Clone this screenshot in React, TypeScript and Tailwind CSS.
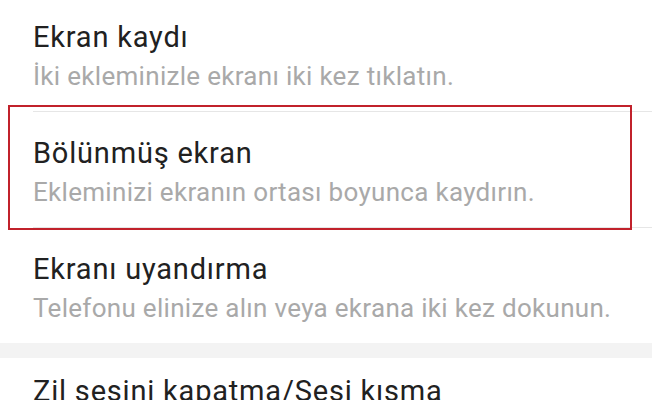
const rows = [
  { title: "Ekran kaydı", desc: "İki ekleminizle ekranı iki kez tıklatın.", pt: "pt-[20px]" },
  { title: "Bölünmüş ekran", desc: "Ekleminizi ekranın ortası boyunca kaydırın.", pt: "pt-[24px]" },
  { title: "Ekranı uyandırma", desc: "Telefonu elinize alın veya ekrana iki kez dokunun.", pt: "pt-[24px]" },
];

function Row({ title, desc, pt, divider }: { title: string; desc: string; pt: string; divider: boolean }) {
  return (
    <div className="pl-[33px]">
      <div className={`${pt} pb-[20px] ${divider ? "border-b border-[#e6e6e6]" : ""}`}>
        <div className="text-[29px] leading-[34px] tracking-[0.8px] text-[#212121]">{title}</div>
        <div className="mt-[7px] text-[26px] leading-[30px] tracking-[0.3px] text-[#a9a9a9]">{desc}</div>
      </div>
    </div>
  );
}

export default function App() {
  return (
    <div className="relative w-[652px] h-[400px] overflow-hidden bg-white font-['Roboto',sans-serif]">
      {rows.map((r, i) => (
        <Row key={r.title} {...r} divider={i < rows.length - 1} />
      ))}

      <div className="h-[15px] bg-[#f3f3f3]" />

      <div className="pl-[33px] pt-[16px]">
        <div className="text-[29px] leading-[34px] tracking-[0.8px] text-[#212121]">Zil sesini kapatma/Sesi kısma</div>
      </div>

      {/* highlight frame */}
      <div className="absolute left-[8px] top-[105px] w-[624px] h-[125px] border-2 border-[#c1212b]" />
    </div>
  );
}
